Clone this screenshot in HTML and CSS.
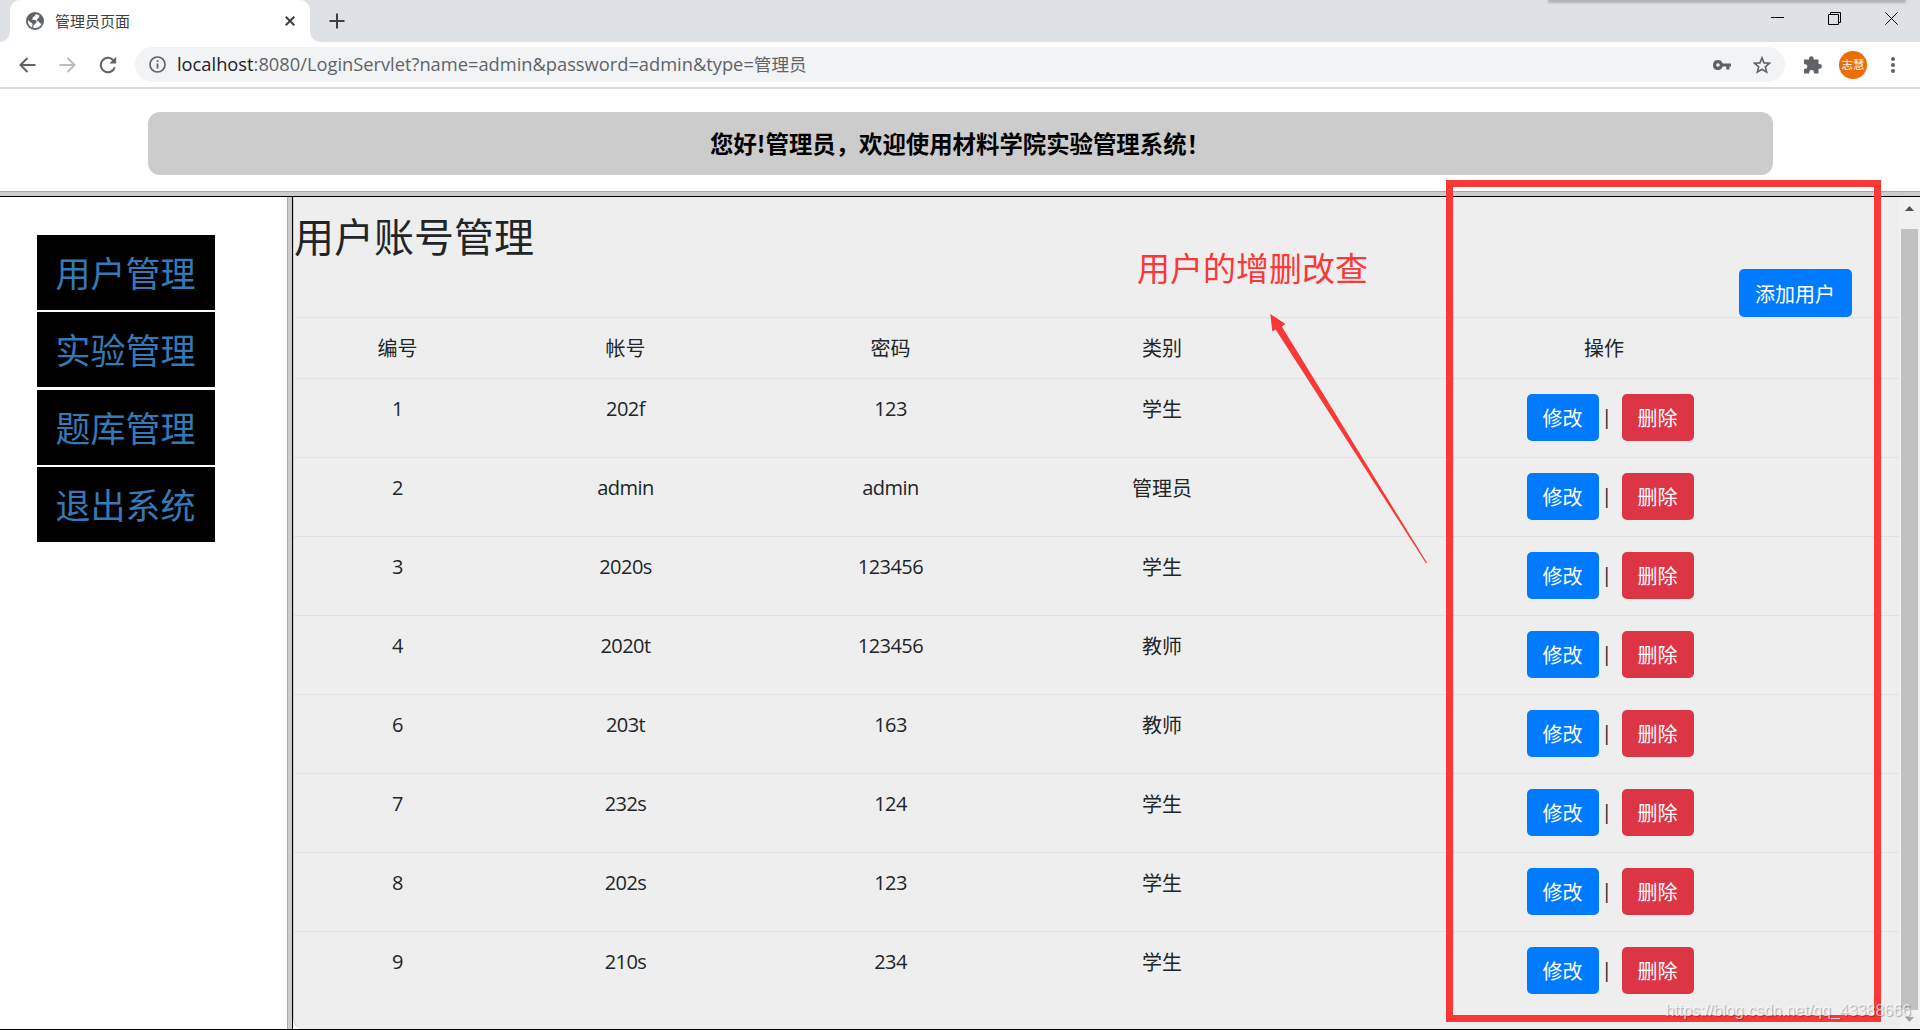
FILE: index.html
```
<!DOCTYPE html>
<html lang="zh-CN">
<head>
<meta charset="UTF-8">
<title>管理员页面</title>
<link rel="stylesheet" href="styles.css">
</head>
<body>

<div class="tabstrip">
  <div class="tab">
    <svg class="globe" width="18" height="18" viewBox="0 0 18 18"><circle cx="9" cy="9" r="9" fill="#5f6368"/><path d="M10.2 2 C8.6 3.4 9 4.4 7.4 4.8 C6.4 5.4 7.2 6.8 5.6 7.4 L8.5 7.9 C10.8 8 11 9.4 10.3 10.6 C9 11.4 9.4 12.8 7.6 13.1 L7.4 16 C11 16.6 14.4 15 15.8 11.8 C14 12 13.2 11 13 9.6 C11.2 9.4 10.6 8.4 11 7.2 C12.4 6.6 13.2 5.4 13.4 3.4 Z M2 8 L4.6 10.4 C6 10.6 6.6 11.2 6.4 12.4 L6.2 15.4 C3.4 14.2 1.6 11.4 2 8 Z" fill="#fff"/></svg>
    <span class="tab-title">管理员页面</span>
    <svg class="tab-close" width="10" height="10" viewBox="0 0 10 10"><path d="M.7 .7 L9.3 9.3 M9.3 .7 L.7 9.3" stroke="#3c4043" stroke-width="2"/></svg>
  </div>
  <svg class="new-tab" width="16" height="16" viewBox="0 0 16 16"><path d="M8 .5 V15.5 M.5 8 H15.5" stroke="#3c4043" stroke-width="2"/></svg>
  <div class="window-controls">
    <svg width="13" height="13" viewBox="0 0 13 13"><path d="M0 5.5 H13" stroke="#000"/></svg>
    <svg width="13" height="13" viewBox="0 0 13 13"><path d="M.5 2.5 H10.5 V12.5 H.5 Z M2.5 2.5 V.5 H12.5 V10.5 H10.5" fill="none" stroke="#000"/></svg>
    <svg width="13" height="13" viewBox="0 0 13 13"><path d="M.3 .3 L12.7 12.7 M12.7 .3 L.3 12.7" stroke="#000"/></svg>
  </div>
  <div class="top-shadow"></div>
</div>

<div class="toolbar">
  <svg class="back" width="17" height="16" viewBox="0 0 17 16"><path d="M16.5 8 H1.5 M8.5 1 L1.5 8 L8.5 15" fill="none" stroke="#5f6368" stroke-width="2"/></svg>
  <svg class="forward" width="17" height="16" viewBox="0 0 17 16"><path d="M.5 8 H15.5 M8.5 1 L15.5 8 L8.5 15" fill="none" stroke="#babcbe" stroke-width="2"/></svg>
  <svg class="reload" width="18" height="18" viewBox="0 0 18 18"><path d="M15.8 11.4 A7.2 7.2 0 1 1 14.3 4.2" fill="none" stroke="#5f6368" stroke-width="2"/><path d="M17.2 .8 V7.6 H10.4 Z" fill="#5f6368"/></svg>
  <div class="omnibox">
    <svg width="17" height="17" viewBox="0 0 17 17"><circle cx="8.5" cy="8.5" r="7.5" fill="none" stroke="#5f6368" stroke-width="1.7"/><path d="M8.5 7.5 V12.5 M8.5 4.3 V6" stroke="#5f6368" stroke-width="1.8"/></svg>
    <span class="url"><b>localhost</b>:8080/LoginServlet?name=admin&amp;password=admin&amp;type=<i>管理员</i></span>
    <svg class="key" width="18" height="10" viewBox="0 0 18 10"><path fill-rule="evenodd" d="M5 0 A5 5 0 0 1 9.7 3.4 H18 V6.6 H16.5 V9.6 H13.3 V6.6 H9.7 A5 5 0 1 1 5 0 Z M5 3.2 A1.8 1.8 0 1 0 5 6.8 A1.8 1.8 0 1 0 5 3.2 Z" fill="#5f6368"/></svg>
    <svg class="star" width="18" height="18" viewBox="0 0 18 18"><path d="M9 1.8 L11 6.9 L16.4 7.3 L12.3 10.8 L13.6 16.1 L9 13.2 L4.4 16.1 L5.7 10.8 L1.6 7.3 L7 6.9 Z" fill="none" stroke="#5f6368" stroke-width="1.6"/></svg>
  </div>
  <svg class="puzzle" width="18" height="18" viewBox="0 0 18 18"><path d="M0 3.5 H5 V2.5 A2.3 2.3 0 0 1 9.6 2.5 V3.5 H14.5 V8 H15.5 A2.3 2.3 0 0 1 15.5 12.8 H14.5 V17.6 H10 V16.4 A2.4 2.4 0 0 0 5.2 16.4 V17.6 H0 V13 H1 A2.4 2.4 0 0 0 1 8.2 H0 Z" fill="#5f6368"/></svg>
  <span class="avatar">志慧</span>
  <svg class="dots" width="4" height="16" viewBox="0 0 4 16"><circle cx="2" cy="2" r="2"/><circle cx="2" cy="8" r="2"/><circle cx="2" cy="14" r="2"/></svg>
</div>

<div class="header">
  <div class="welcome">您好!管理员，欢迎使用材料学院实验管理系统！</div>
</div>

<div class="frames">
  <div class="menu">
    <a>用户管理</a>
    <a>实验管理</a>
    <a>题库管理</a>
    <a>退出系统</a>
  </div>
  <div class="divider"></div>
  <div class="main">
    <h1>用户账号管理</h1>
    <div class="actions"><a class="btn btn-primary">添加用户</a></div>
    <table class="table">
      <colgroup><col class="c1"><col class="c2"><col class="c3"><col class="c4"><col class="c5"></colgroup>
      <tr class="head"><td>编号</td><td>帐号</td><td>密码</td><td>类别</td><td>操作</td></tr>
      <tr><td>1</td><td>202f</td><td>123</td><td class="type">学生</td><td><a class="btn btn-primary">修改</a><span class="bar">|</span><a class="btn btn-danger">删除</a></td></tr>
      <tr><td>2</td><td>admin</td><td>admin</td><td class="type">管理员</td><td><a class="btn btn-primary">修改</a><span class="bar">|</span><a class="btn btn-danger">删除</a></td></tr>
      <tr><td>3</td><td>2020s</td><td>123456</td><td class="type">学生</td><td><a class="btn btn-primary">修改</a><span class="bar">|</span><a class="btn btn-danger">删除</a></td></tr>
      <tr><td>4</td><td>2020t</td><td>123456</td><td class="type">教师</td><td><a class="btn btn-primary">修改</a><span class="bar">|</span><a class="btn btn-danger">删除</a></td></tr>
      <tr><td>6</td><td>203t</td><td>163</td><td class="type">教师</td><td><a class="btn btn-primary">修改</a><span class="bar">|</span><a class="btn btn-danger">删除</a></td></tr>
      <tr><td>7</td><td>232s</td><td>124</td><td class="type">学生</td><td><a class="btn btn-primary">修改</a><span class="bar">|</span><a class="btn btn-danger">删除</a></td></tr>
      <tr><td>8</td><td>202s</td><td>123</td><td class="type">学生</td><td><a class="btn btn-primary">修改</a><span class="bar">|</span><a class="btn btn-danger">删除</a></td></tr>
      <tr><td>9</td><td>210s</td><td>234</td><td class="type">学生</td><td><a class="btn btn-primary">修改</a><span class="bar">|</span><a class="btn btn-danger">删除</a></td></tr>
    </table>
  </div>
  <div class="scrollbar">
    <svg class="up" width="9" height="5" viewBox="0 0 9 5"><path d="M0 5 L4.5 0 L9 5 Z" fill="#505050"/></svg>
    <div class="thumb"></div>
    <svg class="down" width="9" height="5" viewBox="0 0 9 5"><path d="M0 0 L4.5 5 L9 0 Z" fill="#a3a3a3"/></svg>
  </div>
</div>

<div class="mark-box"></div>
<div class="mark-text">用户的增删改查</div>
<svg class="mark-arrow" width="158" height="250" viewBox="0 0 158 250"><path d="M.3 0 L15.5 10 L11.8 12.6 L157 248.8 L156 249.2 L5.6 15.4 L2.3 17.5 Z" fill="#fa3838"/></svg>
<div class="watermark">https://blog.csdn.net/qq_43388666</div>

</body>
</html>
```
FILE: styles.css
```
* {
  box-sizing: border-box;
}
body {
  margin: 0;
  width: 1920px;
  height: 1030px;
  position: relative;
  overflow: hidden;
  display: flex;
  flex-direction: column;
  background: #fff;
  color: #212529;
  font-family: "Open Sans", "Noto Sans CJK SC", sans-serif;
}
svg {
  flex: none;
}

/* browser window */
.tabstrip {
  height: 42px;
  flex: none;
  display: flex;
  background: #dee1e6;
  padding-left: 10px;
  position: relative;
}
.tab {
  width: 300px;
  display: flex;
  align-items: center;
  background: #fff;
  border-radius: 10px 10px 0 0;
  padding: 0 15px 0 16px;
  position: relative;
}
.tab::before,
.tab::after {
  content: "";
  position: absolute;
  bottom: 0;
  width: 10px;
  height: 10px;
}
.tab::before {
  left: -10px;
  background: radial-gradient(circle at 0 0, #dee1e6 9.5px, #fff 10px);
}
.tab::after {
  right: -10px;
  background: radial-gradient(circle at 100% 0, #dee1e6 9.5px, #fff 10px);
}
.tab-title {
  flex: 1;
  margin-left: 11px;
  font-family: "Noto Sans CJK SC", sans-serif;
  font-size: 15px;
  line-height: 20px;
  color: #3c4043;
}
.new-tab {
  margin: 13px 0 0 19px;
}
.window-controls {
  display: flex;
  gap: 44px;
  margin: 12px 22px 0 auto;
}
.top-shadow {
  position: absolute;
  left: 1548px;
  top: -2px;
  width: 358px;
  height: 5px;
  background: #b0b3b8;
  filter: blur(1px);
}
.toolbar {
  height: 47px;
  flex: none;
  display: flex;
  align-items: center;
  border-bottom: 2px solid #d9dae0;
  padding: 0 25px 0 19px;
}
.forward {
  margin-left: 23px;
}
.reload {
  margin-left: 23px;
}
.omnibox {
  width: 1651px;
  height: 35px;
  margin-left: 18px;
  display: flex;
  align-items: center;
  background: #f1f3f4;
  border-radius: 18px;
  padding: 0 14px;
}
.url {
  flex: 1;
  margin-left: 11px;
  font-size: 18.3px;
  line-height: 34px;
  padding-bottom: 2px;
  color: #5f6368;
  white-space: nowrap;
}
.url b {
  font-weight: normal;
  color: #202124;
}
.url i {
  font-style: normal;
  font-size: 17.6px;
}
.star {
  margin-left: 22px;
}
.puzzle {
  margin-left: 19px;
}
.avatar {
  width: 28px;
  height: 28px;
  margin-left: 17px;
  flex: none;
  border-radius: 50%;
  background: #ef6c00;
  color: #fff;
  font-size: 11.5px;
  line-height: 28px;
  text-align: center;
}
.dots {
  margin-left: 24px;
  fill: #5f6368;
}

/* top frame */
.header {
  height: 108px;
  flex: none;
  padding-top: 23px;
  border-bottom: 1px solid #000;
  background: linear-gradient(#a9a9a9, #a9a9a9) 0 102px / 100% 1px no-repeat,
              linear-gradient(#ccc, #ccc) 0 103px / 100% 4px no-repeat;
}
.welcome {
  width: 1625px;
  height: 63px;
  margin: 0 auto;
  border-radius: 12px;
  background: #ccc;
  color: #000;
  font-family: "Noto Sans CJK SC", sans-serif;
  font-weight: bold;
  font-size: 23.4px;
  line-height: 63px;
  text-align: center;
}
.frames {
  height: 833px;
  flex: none;
  display: flex;
  border-bottom: 1px solid #000;
}

/* left frame */
.menu {
  width: 287px;
  padding: 37.9px 0 0 37px;
}
.menu a {
  display: block;
  width: 178px;
  height: 75px;
  margin-bottom: 2.5px;
  background: #000;
  color: #337ab7;
  font-family: "Noto Sans CJK SC", sans-serif;
  font-size: 35px;
  line-height: 74px;
  text-indent: -1px;
  text-align: center;
}
.divider {
  width: 6px;
  background: #ccc;
  border-left: 1px solid #a9a9a9;
  border-right: 1px solid #000;
}

/* right frame */
.main {
  width: 1606px;
  background: #eee;
  border-left: 1px solid #ccc;
  border-bottom-left-radius: 10px;
}
.main h1 {
  margin: 9px 0 0;
  height: 63px;
  font-family: "Noto Sans CJK SC", sans-serif;
  font-weight: normal;
  font-size: 40px;
  line-height: 58px;
}
.actions {
  height: 48px;
  display: flex;
  justify-content: flex-end;
  padding-right: 47px;
}
.btn {
  display: inline-block;
  height: 47px;
  padding: 0 16px;
  border-radius: 5px;
  color: #fff;
  font-family: "Noto Sans CJK SC", sans-serif;
  font-size: 20px;
  letter-spacing: 0;
  line-height: 48px;
  vertical-align: top;
}
.actions .btn {
  height: 48px;
  width: 113px;
  line-height: 50px;
}
.btn-primary {
  background: #007bff;
}
.btn-danger {
  background: #dc3545;
}
.table {
  width: 1605px;
  table-layout: fixed;
  border-collapse: separate;
  border-spacing: 0;
  font-size: 20px;
  letter-spacing: -.55px;
  line-height: 30px;
  text-align: center;
}
.c1 { width: 207px; }
.c2 { width: 249px; }
.c3 { width: 281px; }
.c4 { width: 262px; }
.c5 { width: 606px; }
.table td {
  height: 79px;
  padding: 15px 0;
  border-top: 1px solid #dee2e6;
  vertical-align: top;
}
.table .head td {
  height: 61px;
  font-family: "Noto Sans CJK SC", sans-serif;
  letter-spacing: 0;
}
.table .type {
  font-family: "Noto Sans CJK SC", sans-serif;
  letter-spacing: 0;
}
.table td:last-child {
  padding-left: 16px;
}
.table tr:not(.head) td:last-child {
  padding-left: 28px;
}
.bar {
  display: inline-block;
  width: 23px;
  height: 47px;
  padding-right: 7px;
  line-height: 46px;
  vertical-align: top;
}
.scrollbar {
  width: 21px;
  display: flex;
  flex-direction: column;
  align-items: center;
  background: #f1f1f1;
}
.up {
  margin-top: 9px;
}
.thumb {
  width: 17px;
  height: 781px;
  margin: 18px 0 7px;
  background: #c1c1c1;
}

/* annotations */
.mark-box {
  position: absolute;
  left: 1446px;
  top: 180px;
  width: 435px;
  height: 842px;
  border: 7px solid #fa3838;
}
.mark-text {
  position: absolute;
  left: 1137px;
  top: 244px;
  font-family: "Noto Sans CJK SC", sans-serif;
  font-size: 33px;
  line-height: 46px;
  color: #fa3838;
}
.mark-arrow {
  position: absolute;
  left: 1270px;
  top: 314px;
}
.watermark {
  position: absolute;
  right: 9px;
  top: 1000px;
  font-family: "Liberation Sans", sans-serif;
  font-size: 16px;
  line-height: 22px;
  color: rgba(255, 255, 255, .7);
  text-shadow: 1px 1px 1px rgba(0, 0, 0, .3);
}
```
